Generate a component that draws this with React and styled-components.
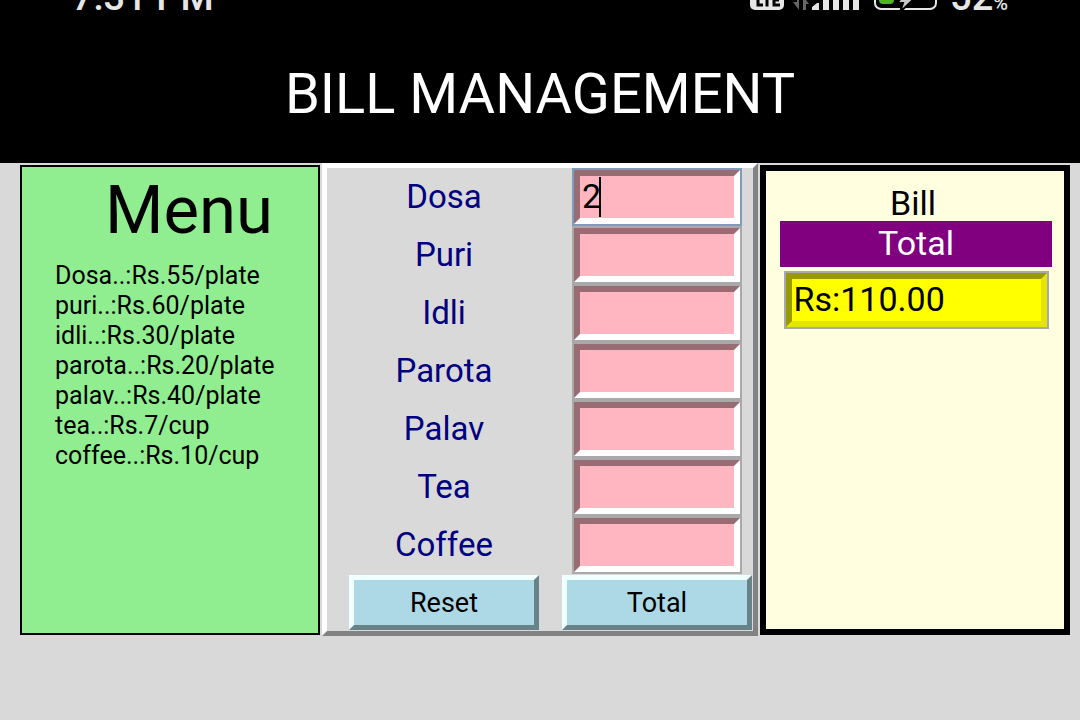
import React, { useState } from "react";
import styled, { createGlobalStyle } from "styled-components";

const PageStyle = createGlobalStyle`
  * { box-sizing: border-box; }
  body {
    margin: 0;
    background: #d9d9d9;
    color: #000;
    font-family: Roboto, "Liberation Sans", sans-serif;
  }
`;

const Header = styled.header`
  background: #000;
  color: #fff;
  padding-bottom: 37px;
`;

const StatusBar = styled.div`
  display: flex;
  align-items: flex-end;
  justify-content: space-between;
  height: 24px;
  padding: 0 72px;
  overflow: hidden;
  color: #e6e6e6;
  font-size: 38px;
  font-weight: 500;
  line-height: 54px;
`;

const StatusIcons = styled.div`
  display: flex;
  align-items: flex-end;
  gap: 10px;
`;

const StatusDrawing = styled.svg`
  display: block;
  width: 190px;
  height: 24px;
`;

const Percent = styled.span`
  font-size: 20px;
  line-height: 20px;
`;

const Title = styled.h1`
  margin: 0;
  padding-top: 38px;
  text-align: center;
  font-size: 56px;
  font-weight: 400;
  line-height: 64px;
`;

const Board = styled.main`
  display: grid;
  grid-template-columns: 300fr 436fr 310fr;
  gap: 2px;
  padding: 0 10px 0 20px;
`;

const SidePanel = styled.section`
  margin: 2px 0 1px;
  border: ${(p) => p.$edge}px solid #000;
  background: ${(p) => p.$fill};
`;

const MenuTitle = styled.h2`
  margin: 0;
  padding: 3px 0 1px 38px;
  text-align: center;
  font-size: 67px;
  font-weight: 400;
  line-height: 80px;
`;

const PriceList = styled.ul`
  margin: 0;
  padding: 10px 0 0 33px;
  list-style: none;
  font-size: 25px;
  line-height: 30px;
`;

const OrderForm = styled.form`
  display: grid;
  grid-template-columns: 234fr 192fr;
  align-content: start;
  justify-items: center;
  border: 5px solid;
  border-color: #fff #828282 #828282 #fff;
  font-size: 33px;
`;

const ItemLabel = styled.label`
  color: #000080;
  line-height: 58px;
`;

const FieldBox = styled.div`
  position: relative;
  width: ${(p) => p.$width};
  height: 58px;
  border: 2px solid ${(p) => (p.$active ? "#7f9db9" : "#a9a9a9")};

  &::after {
    content: "";
    display: ${(p) => (p.$active ? "block" : "none")};
    position: absolute;
    left: 25px;
    top: 7px;
    width: 2px;
    height: 40px;
    background: #000;
  }
`;

const Field = styled.input`
  display: block;
  width: 100%;
  height: 100%;
  padding: 0 2px 2px;
  border: 6px solid;
  border-color: ${(p) => p.$bevel};
  border-radius: 0;
  outline: none;
  background: ${(p) => p.$fill};
  color: #000;
  font-family: inherit;
  font-size: 34px;
`;

const ActionButton = styled.button`
  width: 190px;
  height: 55px;
  margin: 1px 0;
  padding: 0;
  border: 5px solid;
  border-color: #f0ffff #68828a #68828a #f0ffff;
  border-radius: 0;
  background: #add8e6;
  color: #000;
  font-family: inherit;
  font-size: 27px;
`;

const BillBody = styled.div`
  display: flex;
  flex-direction: column;
  align-items: center;
  padding: 12px 12px 0 14px;
  font-size: 34px;
`;

const BillTitle = styled.h2`
  margin: 0;
  padding: 2px 6px 0 0;
  font-size: 34px;
  font-weight: 400;
  line-height: 36px;
`;

const TotalLabel = styled.label`
  width: 100%;
  margin-bottom: 4px;
  padding-bottom: 2px;
  background: #800080;
  color: #fff;
  text-align: center;
  line-height: 44px;
`;

const prices = [
  "Dosa..:Rs.55/plate",
  "puri..:Rs.60/plate",
  "idli..:Rs.30/plate",
  "parota..:Rs.20/plate",
  "palav..:Rs.40/plate",
  "tea..:Rs.7/cup",
  "coffee..:Rs.10/cup",
];

const items = ["Dosa", "Puri", "Idli", "Parota", "Palav", "Tea", "Coffee"];
const rates = [55, 60, 30, 20, 40, 7, 10];
const emptyOrder = items.map(() => "");

function PhoneIcons() {
  return (
    <StatusDrawing viewBox="0 0 190 24" aria-hidden="true">
      <rect x="0" y="-16" width="34" height="26" rx="5" fill="#e6e6e6" />
      <path d="M8 -8V5H13M12 -6.500H21M17 -6.500V6.500M30 5H24V-6H30M24 0H29" fill="none" stroke="#000" strokeWidth="3" />
      <path d="M49 -8V10L43 2H47V-8ZM53 10V-4L59 4H56V10Z" fill="#666" />
      <path d="M62 10V7L67 3H69V10Z" fill="#e6e6e6" />
      <path d="M73 -4H79V10H73ZM83 -8H89V10H83ZM93 -12H99V10H93ZM103 -16H109V10H103Z" fill="#e6e6e6" />
      <rect x="125" y="-16" width="61" height="25" rx="6" fill="none" stroke="#e6e6e6" strokeWidth="2" />
      <rect x="129" y="-12" width="15" height="16" rx="4" fill="#50b41e" />
      <path d="M158 -10L147 3H153L150 12L165 -2H157Z" fill="#c8c8c8" stroke="#000" strokeWidth="2" />
    </StatusDrawing>
  );
}

export default function App() {
  const [order, setOrder] = useState(["2", ...emptyOrder.slice(1)]);
  const [active, setActive] = useState(0);
  const [total, setTotal] = useState("Rs:110.00");

  const change = (index, value) =>
    setOrder(order.map((old, i) => (i === index ? value : old)));

  const addUp = (event) => {
    event.preventDefault();
    const sum = order.reduce((acc, n, i) => acc + Number(n || 0) * rates[i], 0);
    setTotal("Rs:" + sum.toFixed(2));
  };

  const reset = () => {
    setOrder(emptyOrder);
    setTotal("");
  };

  return (
    <>
      <PageStyle />
      <Header>
        <StatusBar>
          <span>7:31 PM</span>
          <StatusIcons>
            <PhoneIcons />
            <span>
              52<Percent>%</Percent>
            </span>
          </StatusIcons>
        </StatusBar>
        <Title>BILL MANAGEMENT</Title>
      </Header>
      <Board>
        <SidePanel $edge={2} $fill="#90ee90">
          <MenuTitle>Menu</MenuTitle>
          <PriceList>
            {prices.map((line) => (
              <li key={line}>{line}</li>
            ))}
          </PriceList>
        </SidePanel>
        <OrderForm onSubmit={addUp}>
          {items.map((name, i) => (
            <React.Fragment key={name}>
              <ItemLabel htmlFor={name}>{name}</ItemLabel>
              <FieldBox $width="170px" $active={active === i}>
                <Field
                  id={name}
                  value={order[i]}
                  onFocus={() => setActive(i)}
                  onChange={(e) => change(i, e.target.value)}
                  $fill="#ffb6c1"
                  $bevel="#996b73 #fff #fff #996b73"
                />
              </FieldBox>
            </React.Fragment>
          ))}
          <ActionButton type="button" onClick={reset}>Reset</ActionButton>
          <ActionButton type="submit">Total</ActionButton>
        </OrderForm>
        <SidePanel $edge={6} $fill="#ffffe0">
          <BillBody>
            <BillTitle>Bill</BillTitle>
            <TotalLabel htmlFor="bill-total">Total</TotalLabel>
            <FieldBox $width="265px">
              <Field
                id="bill-total"
                value={total}
                readOnly
                $fill="#ffff00"
                $bevel="#999900 #e5e500 #e5e500 #999900"
              />
            </FieldBox>
          </BillBody>
        </SidePanel>
      </Board>
    </>
  );
}
